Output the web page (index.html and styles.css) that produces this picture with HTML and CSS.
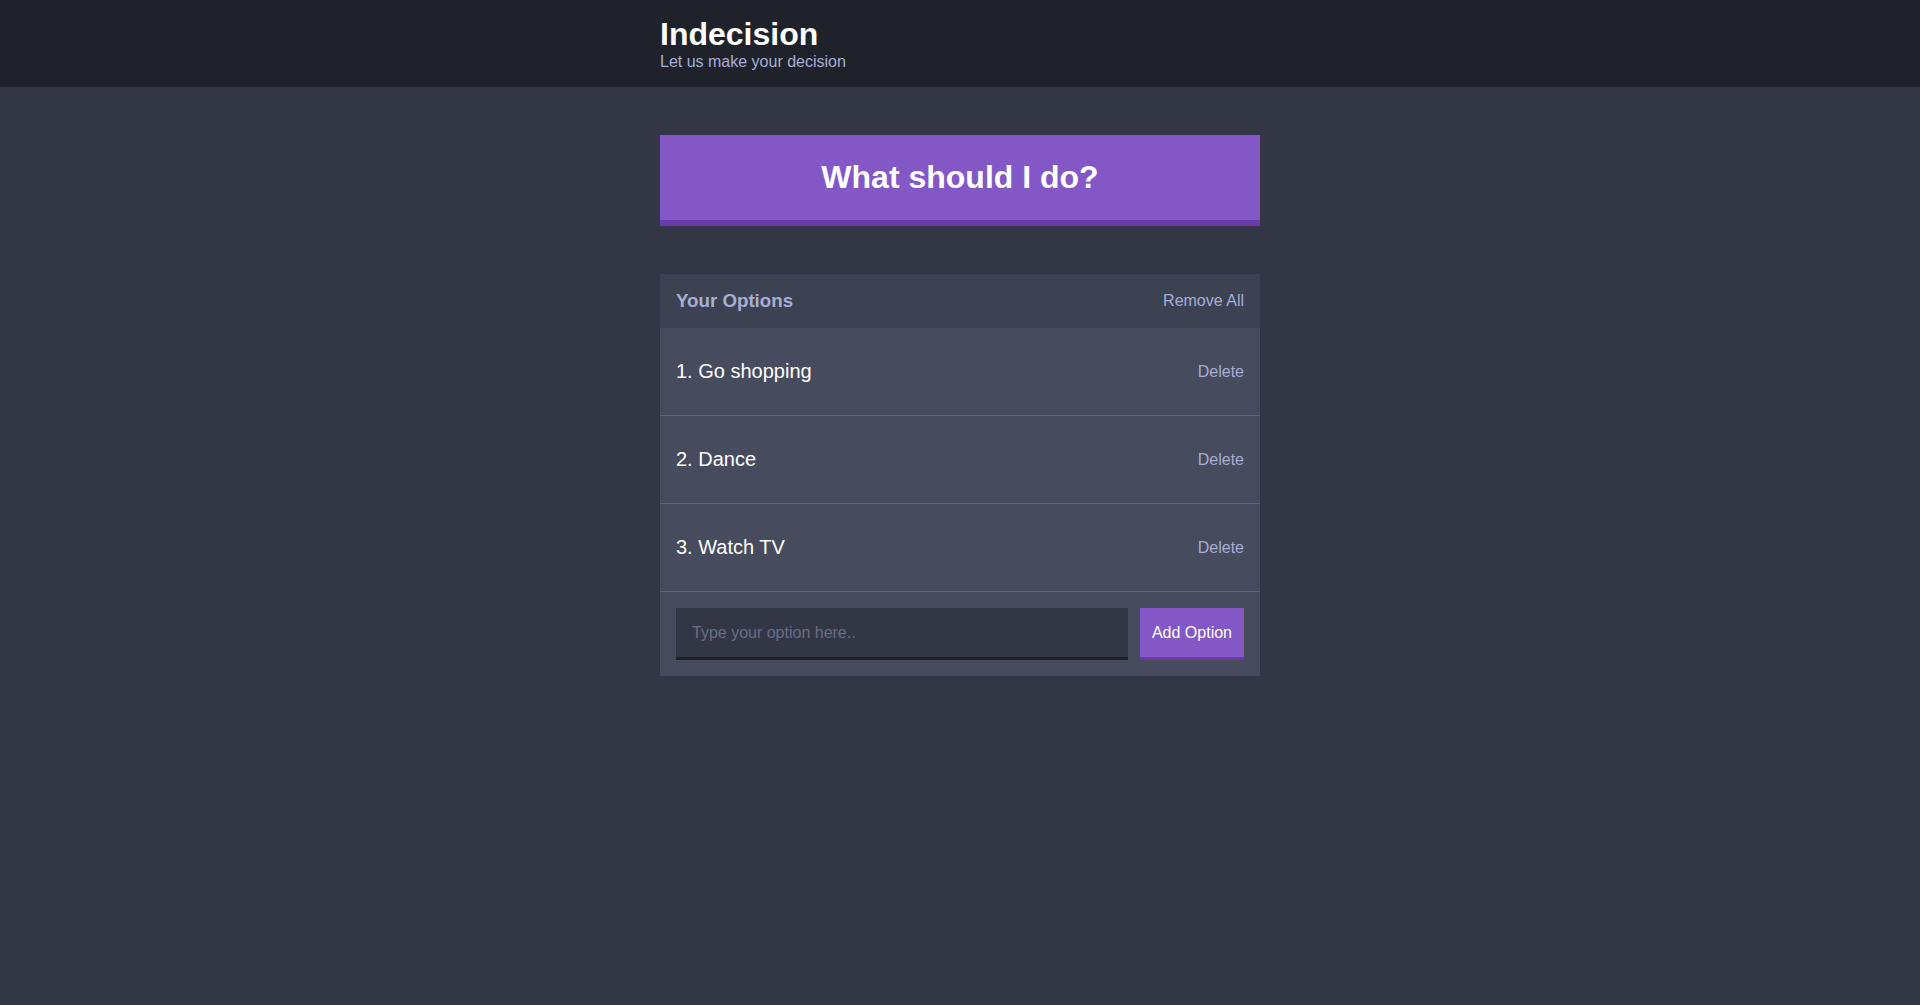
FILE: index.html
```html
<!DOCTYPE html>
<html lang="en">
<head>
<meta charset="utf-8">
<title>Indecision</title>
<link rel="stylesheet" href="styles.css">
</head>
<body>
<header class="header">
  <div class="container">
    <h1 class="header__title">Indecision</h1>
    <h2 class="header__subtitle">Let us make your decision</h2>
  </div>
</header>
<main class="container">
  <button class="big-button">What should I do?</button>
  <section class="widget">
    <div class="widget-header">
      <h3 class="widget-header__title">Your Options</h3>
      <button class="button--link">Remove All</button>
    </div>
    <div class="option">
      <p class="option__text">1. Go shopping</p>
      <button class="button--link">Delete</button>
    </div>
    <div class="option">
      <p class="option__text">2. Dance</p>
      <button class="button--link">Delete</button>
    </div>
    <div class="option">
      <p class="option__text">3. Watch TV</p>
      <button class="button--link">Delete</button>
    </div>
    <form class="add-option">
      <input class="add-option__input" type="text" placeholder="Type your option here..">
      <button class="button" type="button">Add Option</button>
    </form>
  </section>
</main>
</body>
</html>
```

FILE: styles.css
```css
html {
  font-size: 16px;
}

body {
  margin: 0;
  background: #333745;
  color: #ffffff;
  font-family: "Liberation Sans", Arial, Helvetica, sans-serif;
  font-size: 16px;
}

.container {
  max-width: 600px;
  margin: 0 auto;
  padding: 0 16px;
}

.header {
  background: #20222b;
  padding: 16px 0;
  margin-bottom: 48px;
}

.header__title {
  margin: 0;
  font-size: 32px;
  font-weight: bold;
  color: #ffffff;
}

.header__subtitle {
  margin: 0;
  font-size: 16px;
  font-weight: normal;
  color: #a5afd7;
}

.big-button {
  display: block;
  width: 100%;
  background: #8357c5;
  border: none;
  border-bottom: 6px solid #693cad;
  color: #ffffff;
  font-family: inherit;
  font-weight: bold;
  font-size: 32px;
  line-height: normal;
  padding: 24px;
  margin: 0 0 48px;
  cursor: pointer;
}

.widget {
  background: #464b5e;
  margin-bottom: 48px;
}

.widget-header {
  display: flex;
  justify-content: space-between;
  align-items: center;
  background: #3c4251;
  color: #a5afd7;
  padding: 16px;
}

.widget-header__title {
  margin: 0;
  font-size: 18.72px;
  font-weight: bold;
}

.button--link {
  background: none;
  border: none;
  padding: 0;
  color: #a5afd7;
  font-family: inherit;
  font-size: 16px;
  cursor: pointer;
}

.option {
  display: flex;
  justify-content: space-between;
  align-items: center;
  padding: 32px 16px;
  border-bottom: 1px solid #5d647e;
}

.option__text {
  margin: 0;
  color: #ffffff;
  font-size: 20px;
}

.add-option {
  display: flex;
  padding: 16px;
  margin: 0;
}

.add-option__input {
  flex-grow: 1;
  box-sizing: border-box;
  height: 52px;
  margin: 0 12px 0 0;
  padding: 0 16px;
  background: #333745;
  border: none;
  border-bottom: 3px solid #1e2028;
  color: #a5afd7;
  font-family: inherit;
  font-size: 16px;
  outline: none;
}

.add-option__input::placeholder {
  color: #676d88;
}

.button {
  box-sizing: border-box;
  background: #8357c5;
  border: none;
  border-bottom: 3px solid #693cad;
  color: #ffffff;
  font-family: inherit;
  font-size: 16px;
  padding: 0 12px;
  cursor: pointer;
}
```
